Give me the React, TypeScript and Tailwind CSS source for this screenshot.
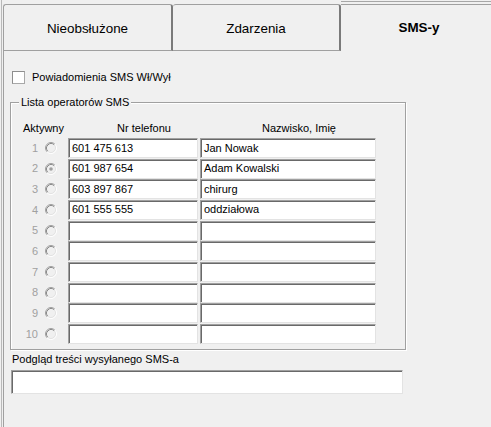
import React from 'react';

const ROWS = [
  { phone: '601 475 613', name: 'Jan Nowak', checked: false },
  { phone: '601 987 654', name: 'Adam Kowalski', checked: true },
  { phone: '603 897 867', name: 'chirurg', checked: false },
  { phone: '601 555 555', name: 'oddziałowa', checked: false },
  { phone: '', name: '', checked: false },
  { phone: '', name: '', checked: false },
  { phone: '', name: '', checked: false },
  { phone: '', name: '', checked: false },
  { phone: '', name: '', checked: false },
  { phone: '', name: '', checked: false },
];

function Radio({ checked }: { checked: boolean }) {
  return (
    <svg width="12" height="12" viewBox="0 0 12 12" className="shrink-0">
      <circle cx="6" cy="6" r="5" fill="#f0f0f0" />
      <path d="M2.11 9.89 A5.5 5.5 0 0 1 9.89 2.11" stroke="#a0a0a0" fill="none" />
      <path d="M2.82 9.18 A4.5 4.5 0 0 1 9.18 2.82" stroke="#8a8a8a" fill="none" />
      <path d="M9.89 2.11 A5.5 5.5 0 0 1 2.11 9.89" stroke="#ffffff" fill="none" />
      <path d="M9.18 2.82 A4.5 4.5 0 0 1 2.82 9.18" stroke="#e3e3e3" fill="none" />
      {checked && <circle cx="6" cy="6" r="1.8" fill="#a0a0a0" />}
    </svg>
  );
}

function Field({ value, className }: { value: string; className: string }) {
  return (
    <div
      className={`h-full bg-white border border-t-[#a0a0a0] border-l-[#a0a0a0] border-r-[#e3e3e3] border-b-[#e3e3e3] shadow-[inset_1px_1px_0_#696969] pl-[3px] flex items-center leading-none ${className}`}
    >
      {value}
    </div>
  );
}

export default function App() {
  return (
    <div className="w-[491px] h-[427px] bg-[#f0f0f0] overflow-hidden pl-[1px] font-['Liberation_Sans',Arial,sans-serif] text-[11px] text-black">
      <div className="h-full border-l border-[#b9b9b9] pl-[1px] flex flex-col">
        {/* tabs */}
        <div className="flex h-[51px] shrink-0 items-end text-[13.4px]">
          <div className="w-[170px] h-[47px] border border-[#a0a0a0] border-r-2 border-r-[#7a7a7a] rounded-t-[3px] flex items-center justify-center pt-[3px]">
            Nieobsłużone
          </div>
          <div className="w-[168px] h-[47px] border-t border-b border-[#a0a0a0] border-r-2 border-r-[#7a7a7a] rounded-t-[3px] flex items-center justify-center pt-[3px]">
            Zdarzenia
          </div>
          <div className="flex-1 h-[50px] border-t border-[#a7a7a7] flex flex-col">
            <div className="mt-[2px] flex-1 border-t border-[#a0a0a0] flex items-center justify-center font-bold pt-[1px] pl-[6px]">
              SMS-y
            </div>
          </div>
        </div>

        {/* panel */}
        <div className="flex-1 border-l border-[#a0a0a0] flex flex-col">
          <div className="mt-[20px] ml-[8px] flex items-center h-[13px]">
            <div className="w-[13px] h-[13px] bg-white border border-t-[#8e8e8e] border-l-[#8e8e8e] border-r-[#a8a8a8] border-b-[#a8a8a8]" />
            <span className="ml-[7px]">Powiadomienia SMS Wł/Wył</span>
          </div>

          <div className="relative mt-[18px] ml-[6px] w-[396px] border border-[#a0a0a0] shadow-[1px_1px_0_#ffffff,inset_1px_1px_0_#ffffff] pt-[19px] pb-[5px]">
            <span className="absolute -top-[7px] left-[8px] px-[2px] bg-[#f0f0f0] leading-[13px]">
              Lista operatorów SMS
            </span>
            <div className="flex h-[13px] items-center leading-none">
              <span className="w-[57px] pl-[12px]">Aktywny</span>
              <span className="ml-[11px] w-[130px] text-center">Nr telefonu</span>
              <span className="ml-[2px] w-[176px] text-center">Nazwisko, Imię</span>
            </div>
            <div className="mt-[3px] flex flex-col gap-y-[0.67px]">
              {ROWS.map((r, i) => (
                <div key={i} className="flex items-center h-[20px]">
                  <span className="w-[27px] text-right text-[#a0a0a0]">{i + 1}</span>
                  <span className="ml-[7px] flex items-center">
                    <Radio checked={r.checked} />
                  </span>
                  <Field value={r.phone} className="ml-[11px] w-[130px]" />
                  <Field value={r.name} className="ml-[2px] w-[176px]" />
                </div>
              ))}
            </div>
          </div>

          <div className="mt-[3px] ml-[8px] h-[13px] flex items-center">Podgląd treści wysyłanego SMS-a</div>
          <div className="mt-[4px] ml-[7px] w-[392px] h-[24px]">
            <Field value="" className="" />
          </div>
        </div>
      </div>
    </div>
  );
}
